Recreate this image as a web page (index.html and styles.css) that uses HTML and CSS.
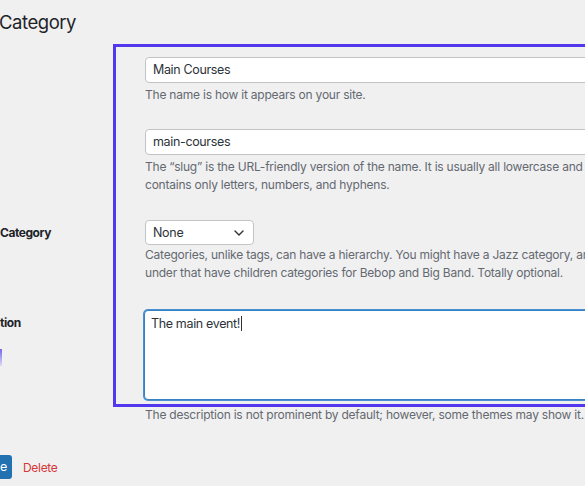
FILE: index.html
```html
<!DOCTYPE html>
<html lang="en">
<head>
<meta charset="utf-8">
<title>Edit Category</title>
<link rel="stylesheet" href="styles.css">
</head>
<body>
<div class="wrap">
  <h1 class="title">Category</h1>

  <form class="form">
    <div class="row row-name">
      <div class="label"></div>
      <div class="field">
        <div class="input">Main Courses</div>
        <p class="desc">The name is how it appears on your site.</p>
      </div>
    </div>

    <div class="row row-slug">
      <div class="label"></div>
      <div class="field">
        <div class="input">main-courses</div>
        <p class="desc">The “slug” is the URL-friendly version of the name. It is usually all lowercase and<br>contains only letters, numbers, and hyphens.</p>
      </div>
    </div>

    <div class="row row-parent">
      <div class="label label-parent">Category</div>
      <div class="field">
        <div class="select">
          <span>None</span>
          <svg class="chev" width="10" height="6" viewBox="0 0 10 6"><path d="M1 1l4 4 4-4" fill="none" stroke="#2c3338" stroke-width="1.4" stroke-linecap="round" stroke-linejoin="round"/></svg>
        </div>
        <p class="desc desc-parent">Categories, unlike tags, can have a hierarchy. You might have a Jazz category, and<br>under that have children categories for Bebop and Big Band. Totally optional.</p>
      </div>
    </div>

    <div class="row row-desc">
      <div class="label label-desc">tion</div>
      <div class="field">
        <div class="textarea">The main event!<span class="caret"></span></div>
        <p class="desc desc-last">The description is not prominent by default; however, some themes may show it.</p>
      </div>
    </div>

    <div class="actions">
      <span class="btn">e</span>
      <span class="delete">Delete</span>
    </div>
  </form>

  <div class="highlight"></div>
  <div class="marker"></div>
</div>
</body>
</html>
```

FILE: styles.css
```css
html, body {
  margin: 0;
  padding: 0;
  background: #f0f0f1;
  overflow: hidden;
}

body {
  width: 585px;
  height: 486px;
  font-family: "Inter", "Noto Sans", sans-serif;
  font-size: 12px;
  letter-spacing: -0.2px;
  color: #2c3338;
}

.wrap {
  position: relative;
  height: 486px;
}

.title {
  margin: 0 0 0 -1px;
  padding-top: 10px;
  height: 24px;
  line-height: 24px;
  font-size: 18.5px;
  font-weight: 400;
  color: #1d2327;
  letter-spacing: -0.45px;
}

.form {
  margin: 0;
  padding-top: 23px;
}

.row {
  display: grid;
  grid-template-columns: 145px 460px;
}

.row-slug { margin-top: 25px; }
.row-parent { margin-top: 26px; }
.row-desc { margin-top: 28px; }

.label {
  font-weight: 700;
  font-size: 12px;
  letter-spacing: -0.45px;
  color: #1d2327;
  line-height: 18px;
}

.label-parent { padding-top: 4px; }
.label-desc { padding-top: 4px; }

.input {
  box-sizing: border-box;
  height: 26px;
  line-height: 24px;
  padding: 0 7px;
  background: #fff;
  border: 1px solid #c3c4c7;
  border-radius: 4px;
  font-size: 12.5px;
  letter-spacing: -0.35px;
  color: #2c3338;
}

.desc {
  margin: 3px 0 0;
  line-height: 18px;
  color: #646970;
  font-size: 12px;
  letter-spacing: -0.22px;
  white-space: nowrap;
}

.desc-parent { margin-top: 1px; }
.desc-last { margin-top: 6px; }

.select {
  box-sizing: border-box;
  width: 109px;
  height: 25px;
  padding: 0 9px 0 7px;
  display: flex;
  align-items: center;
  justify-content: space-between;
  background: #fff;
  border: 1px solid #c3c4c7;
  border-radius: 4px;
  font-size: 12.5px;
  letter-spacing: -0.3px;
  color: #2c3338;
}

.chev { display: block; }

.textarea {
  box-sizing: border-box;
  height: 90px;
  margin-left: -1px;
  padding: 4px 6px;
  line-height: 18px;
  background: #fff;
  border: 1px solid #3582c4;
  box-shadow: 0 0 0 1px #4a90d0;
  border-radius: 4px;
  font-size: 12.5px;
  letter-spacing: -0.35px;
  color: #2c3338;
}

.caret {
  display: inline-block;
  width: 1px;
  height: 15px;
  margin-left: 1px;
  vertical-align: -3px;
  background: #2c3338;
}

.actions {
  margin-top: 31px;
  display: flex;
  align-items: center;
  gap: 11px;
}

.btn {
  box-sizing: border-box;
  height: 24px;
  width: 12px;
  padding-right: 6px;
  line-height: 24px;
  background: #2271b1;
  color: #fff;
  border-radius: 0 3px 3px 0;
  font-size: 12.5px;
  text-align: right;
  overflow: hidden;
}

.delete {
  color: #d63638;
  font-size: 12px;
  letter-spacing: -0.3px;
}

.highlight {
  position: absolute;
  left: 113px;
  top: 44px;
  width: 600px;
  height: 357px;
  border: 3px solid #5138ee;
}

.marker {
  position: absolute;
  left: 0;
  top: 349px;
  width: 2px;
  height: 17px;
  background: linear-gradient(#7467f2, rgba(116, 103, 242, 0.15));
}
```
